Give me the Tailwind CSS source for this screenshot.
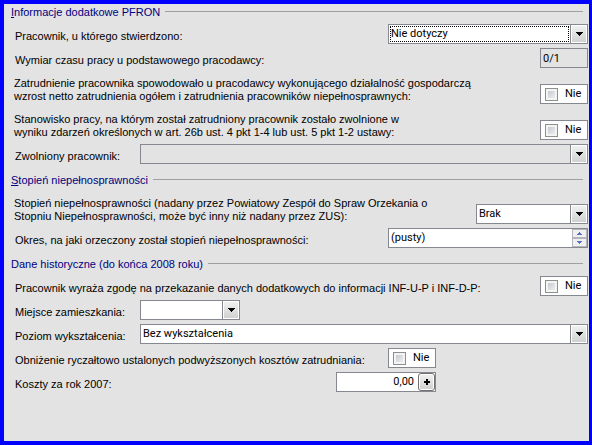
<!DOCTYPE html>
<html lang="pl">
<head>
    <meta charset="UTF-8">
    <meta name="viewport" content="width=device-width, initial-scale=1.0">
    <title>Informacje dodatkowe PFRON</title>
    <script src="https://cdn.jsdelivr.net/npm/@tailwindcss/browser@4"></script>
</head>
<body class="bg-[#e3e3e3] text-black text-[11px] leading-4 font-['Liberation_Sans',Arial,sans-serif]">
    <!-- Shared symbols for the field buttons -->
    <svg class="hidden" aria-hidden="true">
        <symbol id="arrow" viewBox="0 0 7 4">
            <path d="M0 0h7v1H6v1H5v1H4v1H3V3H2V2H1V1H0z" fill="#000" shape-rendering="crispEdges"/>
        </symbol>
    </svg>

    <form class="min-h-screen border-4 border-r-3 border-[#0000ff] pl-[11px] pr-px">
        <!-- Informacje dodatkowe PFRON -->
        <section class="flex flex-col gap-1">
            <div class="flex items-center gap-[5px] -ml-1 pr-[5px]">
                <h2 class="text-[#000080] whitespace-nowrap"><u>I</u>nformacje dodatkowe PFRON</h2>
                <div class="flex-1 h-px bg-[#a0a0a0] mb-px"></div>
            </div>

            <div class="flex items-end justify-between">
                <label for="stwierdzono">Pracownik, u którego stwierdzono:</label>
                <div class="flex w-[200px] h-5 bg-white border border-[#868890]">
                    <select id="stwierdzono" class="appearance-none flex-1 min-w-0 m-px border border-dotted border-black leading-[14px] font-[Roboto,Tahoma,sans-serif] outline-none">
                        <option>Nie dotyczy</option>
                    </select>
                    <span class="flex items-center justify-center w-[17px] border-l border-[#868890] bg-linear-to-b from-[#f2f2f2] to-[#cfcfcf] inset-ring inset-ring-white pointer-events-none">
                        <svg class="w-[7px] h-1"><use href="#arrow"/></svg>
                    </span>
                </div>
            </div>

            <div class="flex items-end justify-between">
                <label for="wymiar">Wymiar czasu pracy u podstawowego pracodawcy:</label>
                <input id="wymiar" type="text" value="0/1" readonly class="w-12 h-5 px-0.5 border border-[#868890] bg-[#e3e3e3] font-[Roboto,Tahoma,sans-serif] outline-none">
            </div>

            <div class="flex items-end justify-between min-h-8">
                <label for="wzrost" class="-ml-px pb-px leading-[13px]">Zatrudnienie pracownika spowodowało u pracodawcy wykonującego działalność gospodarczą<br>wzrost netto zatrudnienia ogółem i zatrudnienia pracowników niepełnosprawnych:</label>
                <label class="flex items-center gap-[7px] shrink-0 w-12 h-5 pl-1 bg-white border border-[#868890] font-[Roboto,Tahoma,sans-serif]">
                    <input id="wzrost" type="checkbox" class="appearance-none w-[13px] h-[13px] border border-[#8e8f8f] bg-linear-to-br from-[#bcc1c7] to-[#f8f8f8] inset-ring-2 inset-ring-[#f4f4f4] checked:from-[#4b6097]">
                    Nie
                </label>
            </div>

            <div class="flex items-end justify-between min-h-8">
                <label for="stanowisko" class="-ml-px pb-px leading-[13px]">Stanowisko pracy, na którym został zatrudniony pracownik zostało zwolnione w<br>wyniku zdarzeń określonych w art. 26b ust. 4 pkt 1-4 lub ust. 5 pkt 1-2 ustawy:</label>
                <label class="flex items-center gap-[7px] shrink-0 w-12 h-5 pl-1 bg-white border border-[#868890] font-[Roboto,Tahoma,sans-serif]">
                    <input id="stanowisko" type="checkbox" class="appearance-none w-[13px] h-[13px] border border-[#8e8f8f] bg-linear-to-br from-[#bcc1c7] to-[#f8f8f8] inset-ring-2 inset-ring-[#f4f4f4] checked:from-[#4b6097]">
                    Nie
                </label>
            </div>

            <div class="flex items-end">
                <label for="zwolniony" class="w-[125px] shrink-0">Zwolniony pracownik:</label>
                <div class="flex flex-1 h-5 border border-[#868890]">
                    <select id="zwolniony" class="appearance-none flex-1 min-w-0 m-px border border-transparent leading-[14px] font-[Roboto,Tahoma,sans-serif] outline-none">
                        <option></option>
                    </select>
                    <span class="flex items-center justify-center w-[17px] border-l border-[#868890] bg-linear-to-b from-[#f2f2f2] to-[#cfcfcf] inset-ring inset-ring-white pointer-events-none">
                        <svg class="w-[7px] h-1"><use href="#arrow"/></svg>
                    </span>
                </div>
            </div>
        </section>

        <!-- Stopień niepełnosprawności -->
        <section class="flex flex-col gap-1 mt-2">
            <div class="flex items-center gap-[5px] -ml-1 pr-[5px]">
                <h2 class="text-[#000080] whitespace-nowrap"><u>S</u>topień niepełnosprawności</h2>
                <div class="flex-1 h-px bg-[#a0a0a0] mb-px"></div>
            </div>

            <div class="flex items-end justify-between min-h-8">
                <label for="stopien" class="-ml-px pb-px leading-[13px]">Stopień niepełnosprawności (nadany przez Powiatowy Zespół do Spraw Orzekania o<br>Stopniu Niepełnosprawności, może być inny niż nadany przez ZUS):</label>
                <div class="flex w-28 h-5 shrink-0 bg-white border border-[#868890]">
                    <select id="stopien" class="appearance-none flex-1 min-w-0 m-px border border-transparent leading-[14px] font-[Roboto,Tahoma,sans-serif] outline-none">
                        <option>Brak</option>
                    </select>
                    <span class="flex items-center justify-center w-[17px] border-l border-[#868890] bg-linear-to-b from-[#f2f2f2] to-[#cfcfcf] inset-ring inset-ring-white pointer-events-none">
                        <svg class="w-[7px] h-1"><use href="#arrow"/></svg>
                    </span>
                </div>
            </div>

            <div class="flex items-end justify-between">
                <label for="okres">Okres, na jaki orzeczony został stopień niepełnosprawności:</label>
                <div class="flex w-[200px] h-5 bg-white border border-[#868890]">
                    <input id="okres" type="text" value="(pusty)" class="flex-1 min-w-0 px-0.5 font-[Roboto,Tahoma,sans-serif] outline-none">
                    <div class="flex flex-col w-[15px]">
                        <button type="button" aria-label="Następny" class="flex flex-1 items-center justify-center border border-[#b4b6bc] bg-[#f0f0f0]">
                            <svg class="w-[5px] h-[3px]" viewBox="0 0 5 3" shape-rendering="crispEdges"><path d="M2 0h1v1h1v1h1v1H0V2h1V1h1z" fill="#5a6fb5"/></svg>
                        </button>
                        <button type="button" aria-label="Poprzedni" class="flex flex-1 items-center justify-center border border-[#b4b6bc] bg-[#f0f0f0]">
                            <svg class="w-[5px] h-[3px]" viewBox="0 0 5 3" shape-rendering="crispEdges"><path d="M0 0h5v1H4v1H3v1H2V2H1V1H0z" fill="#5a6fc8"/></svg>
                        </button>
                    </div>
                </div>
            </div>
        </section>

        <!-- Dane historyczne -->
        <section class="flex flex-col gap-1 mt-2">
            <div class="flex items-center gap-[5px] -ml-1 pr-[5px]">
                <h2 class="text-[#000080] whitespace-nowrap">Dane historyczne (do końca 2008 roku)</h2>
                <div class="flex-1 h-px bg-[#a0a0a0] mb-px"></div>
            </div>

            <div class="flex items-end justify-between">
                <label for="zgoda">Pracownik wyraża zgodę na przekazanie danych dodatkowych do informacji INF-U-P i INF-D-P:</label>
                <label class="flex items-center gap-[7px] shrink-0 w-12 h-5 pl-1 bg-white border border-[#868890] font-[Roboto,Tahoma,sans-serif]">
                    <input id="zgoda" type="checkbox" class="appearance-none w-[13px] h-[13px] border border-[#8e8f8f] bg-linear-to-br from-[#bcc1c7] to-[#f8f8f8] inset-ring-2 inset-ring-[#f4f4f4] checked:from-[#4b6097]">
                    Nie
                </label>
            </div>

            <div class="flex items-end">
                <label for="miejsce" class="w-[125px] shrink-0">Miejsce zamieszkania:</label>
                <div class="flex w-[100px] h-5 bg-white border border-[#868890]">
                    <select id="miejsce" class="appearance-none flex-1 min-w-0 m-px border border-transparent leading-[14px] font-[Roboto,Tahoma,sans-serif] outline-none">
                        <option></option>
                    </select>
                    <span class="flex items-center justify-center w-[17px] border-l border-[#868890] bg-linear-to-b from-[#f2f2f2] to-[#cfcfcf] inset-ring inset-ring-white pointer-events-none">
                        <svg class="w-[7px] h-1"><use href="#arrow"/></svg>
                    </span>
                </div>
            </div>

            <div class="flex items-end">
                <label for="poziom" class="w-[125px] shrink-0">Poziom wykształcenia:</label>
                <div class="flex flex-1 h-5 bg-white border border-[#868890]">
                    <select id="poziom" class="appearance-none flex-1 min-w-0 m-px border border-transparent leading-[14px] font-[Roboto,Tahoma,sans-serif] outline-none">
                        <option>Bez wykształcenia</option>
                    </select>
                    <span class="flex items-center justify-center w-[17px] border-l border-[#868890] bg-linear-to-b from-[#f2f2f2] to-[#cfcfcf] inset-ring inset-ring-white pointer-events-none">
                        <svg class="w-[7px] h-1"><use href="#arrow"/></svg>
                    </span>
                </div>
            </div>

            <div class="flex items-end">
                <label for="obnizenie" class="w-[373px] shrink-0">Obniżenie ryczałtowo ustalonych podwyższonych kosztów zatrudniania:</label>
                <label class="flex items-center gap-[7px] shrink-0 w-12 h-5 pl-1 bg-white border border-[#868890] font-[Roboto,Tahoma,sans-serif]">
                    <input id="obnizenie" type="checkbox" class="appearance-none w-[13px] h-[13px] border border-[#8e8f8f] bg-linear-to-br from-[#bcc1c7] to-[#f8f8f8] inset-ring-2 inset-ring-[#f4f4f4] checked:from-[#4b6097]">
                    Nie
                </label>
            </div>

            <div class="flex items-end">
                <label for="koszty" class="w-[321px] shrink-0">Koszty za rok 2007:</label>
                <div class="flex w-[100px] h-5 bg-white border border-[#868890]">
                    <input id="koszty" type="text" value="0,00" class="flex-1 min-w-0 pr-1 text-right font-[Roboto,Tahoma,sans-serif] outline-none">
                    <button type="button" aria-label="Kalkulator" class="flex items-center justify-center w-[17px] rounded-[3px] border border-[#707070] bg-linear-to-b from-[#f2f2f2] to-[#cfcfcf] inset-ring inset-ring-white">
                        <svg class="w-[6px] h-[6px]" viewBox="0 0 6 6" shape-rendering="crispEdges"><path d="M2 0h2v2h2v2H4v2H2V4H0V2h2z" fill="#000"/></svg>
                    </button>
                </div>
            </div>
        </section>
    </form>
</body>
</html>
